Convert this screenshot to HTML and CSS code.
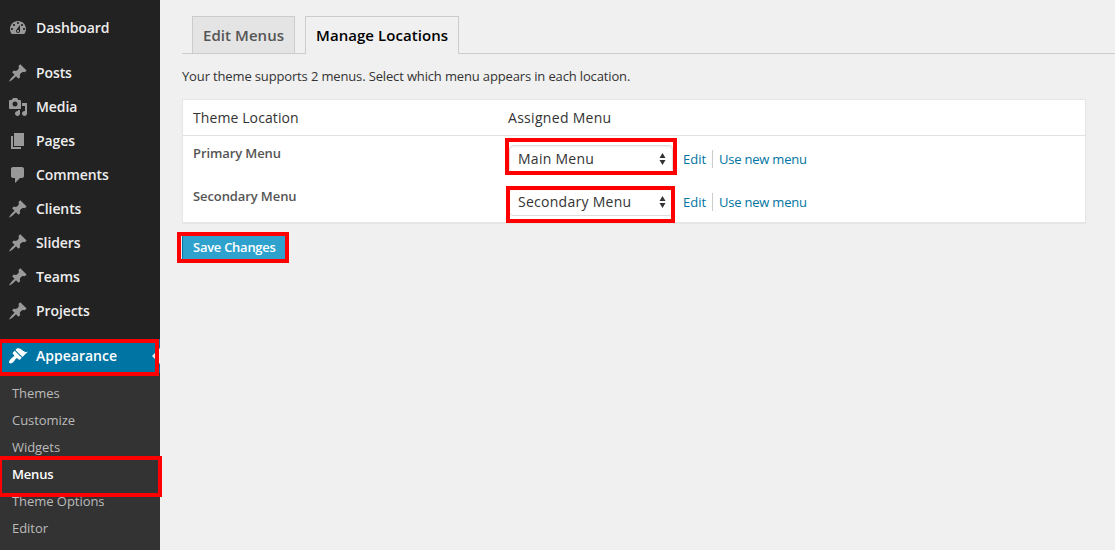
FILE: index.html
```html
<!DOCTYPE html>
<html lang="en">
<head>
<meta charset="utf-8">
<title>Menus</title>
<link rel="stylesheet" href="styles.css">
</head>
<body>
<svg class="defs" width="0" height="0" aria-hidden="true">
<symbol id="dash" viewBox="0 0 20 20"><path d="M3.76 16h12.48c1.1-1.37 1.76-3.11 1.76-5 0-4.42-3.58-8-8-8s-8 3.58-8 8c0 1.89.66 3.63 1.76 5zM10 4c.55 0 1 .45 1 1s-.45 1-1 1-1-.45-1-1 .45-1 1-1zM6 6c.55 0 1 .45 1 1s-.45 1-1 1-1-.45-1-1 .45-1 1-1zm8 0c.55 0 1 .45 1 1s-.45 1-1 1-1-.45-1-1 .45-1 1-1zm-5.37 5.55L12 7v6c0 1.1-.9 2-2 2s-2-.9-2-2c0-.57.24-1.08.63-1.45zM4 10c.55 0 1 .45 1 1s-.45 1-1 1-1-.45-1-1 .45-1 1-1zm12 0c.55 0 1 .45 1 1s-.45 1-1 1-1-.45-1-1 .45-1 1-1zm-5 3c0-.55-.45-1-1-1s-1 .45-1 1 .45 1 1 1 1-.45 1-1z" fill-rule="evenodd"/></symbol>
<symbol id="pin" viewBox="0 0 20 20"><path d="M10.44 3.02l1.82-1.82 6.36 6.35-1.83 1.82c-1.05-.68-2.48-.57-3.41.36l-.75.75c-.92.93-1.04 2.35-.35 3.41l-1.83 1.82-2.41-2.41-2.8 2.79c-.42.42-3.38 2.71-3.8 2.29s1.86-3.39 2.28-3.81l2.79-2.79L4.1 9.36l1.83-1.82c1.05.69 2.48.57 3.4-.36l.75-.75c.93-.92 1.05-2.35.36-3.41z"/></symbol>
<symbol id="media" viewBox="0 0 20 20"><path d="M13 11V4c0-.55-.45-1-1-1h-1.67L9 1H5L3.67 3H2c-.55 0-1 .45-1 1v7c0 .55.45 1 1 1h10c.55 0 1-.45 1-1zM7 4.5c1.38 0 2.5 1.12 2.5 2.5S8.38 9.5 7 9.5 4.5 8.38 4.5 7 5.62 4.5 7 4.5zM14 6h5v10.5c0 1.38-1.12 2.5-2.5 2.5S14 17.88 14 16.5s1.12-2.5 2.5-2.5c.17 0 .34.02.5.05V9h-3V6zm-4 8.05V13h2v3.5c0 1.38-1.12 2.5-2.5 2.5S7 17.88 7 16.5 8.12 14 9.5 14c.17 0 .34.02.5.05z" fill-rule="evenodd"/></symbol>
<symbol id="page" viewBox="0 0 20 20"><path d="M6 15V2h10v13H6zm-1 1h8v2H3V5h2v11z"/></symbol>
<symbol id="comment" viewBox="0 0 20 20"><path d="M5 2h9c1.1 0 2 .9 2 2v7c0 1.1-.9 2-2 2h-2l-5 5v-5H5c-1.1 0-2-.9-2-2V4c0-1.1.9-2 2-2z"/></symbol>
<symbol id="brush" viewBox="0 0 20 20"><path d="M14.48 11.06L7.41 3.99l1.5-1.5c.5-.56 2.3-.47 3.51.32 1.21.8 1.43 1.28 2.91 2.1 1.18.64 2.45 1.26 4.45.85zm-.71.71L6.7 4.7 4.93 6.47c-.39.39-.39 1.02 0 1.41l1.06 1.06c.39.39.39 1.03 0 1.42-.6.6-1.43 1.11-2.21 1.69-.35.26-.7.53-1.01.84C1.43 14.23.4 16.08 1.4 17.07c.99 1 2.84-.03 4.18-1.36.31-.31.58-.66.85-1.02.57-.78 1.08-1.61 1.69-2.21.39-.39 1.02-.39 1.41 0l1.06 1.06c.39.39 1.02.39 1.41 0z"/></symbol>
<symbol id="updown" viewBox="0 0 6 12"><path d="M3 0l3 5H0zM3 12l3-5H0z"/></symbol>
</svg>
<div class="app">
<nav class="sidebar">
<a class="item first"><svg class="icon"><use href="#dash"/></svg><span>Dashboard</span></a>
<a class="item"><svg class="icon"><use href="#pin"/></svg><span>Posts</span></a>
<a class="item"><svg class="icon"><use href="#media"/></svg><span>Media</span></a>
<a class="item"><svg class="icon"><use href="#page"/></svg><span>Pages</span></a>
<a class="item"><svg class="icon"><use href="#comment"/></svg><span>Comments</span></a>
<a class="item"><svg class="icon"><use href="#pin"/></svg><span>Clients</span></a>
<a class="item"><svg class="icon"><use href="#pin"/></svg><span>Sliders</span></a>
<a class="item"><svg class="icon"><use href="#pin"/></svg><span>Teams</span></a>
<a class="item"><svg class="icon"><use href="#pin"/></svg><span>Projects</span></a>
<a class="item current"><svg class="icon"><use href="#brush"/></svg><span>Appearance</span><i class="mark mark-appearance"></i></a>
<div class="submenu">
<a class="sub">Themes</a>
<a class="sub">Customize</a>
<a class="sub">Widgets</a>
<a class="sub active">Menus<i class="mark mark-menus"></i></a>
<a class="sub">Theme Options</a>
<a class="sub">Editor</a>
</div>
</nav>
<main class="content">
<div class="tabs"><a class="tab">Edit Menus</a><a class="tab selected">Manage Locations</a></div>
<p class="intro">Your theme supports 2 menus. Select which menu appears in each location.</p>
<section class="table">
<div class="row head"><div class="name">Theme Location</div><div class="assigned">Assigned Menu</div></div>
<div class="row"><div class="name">Primary Menu</div>
<div class="assign"><div class="select"><span>Main Menu</span><svg class="arrows"><use href="#updown"/></svg><i class="mark mark-main"></i></div><a class="link">Edit</a><a class="link new">Use new menu</a></div></div>
<div class="row"><div class="name">Secondary Menu</div>
<div class="assign"><div class="select"><span>Secondary Menu</span><svg class="arrows"><use href="#updown"/></svg><i class="mark mark-secondary"></i></div><a class="link">Edit</a><a class="link new">Use new menu</a></div></div>
</section>
<a class="save"><span>Save Changes</span><i class="mark mark-save"></i></a>
</main>
</div>
</body>
</html>
```
FILE: styles.css
```css
* { box-sizing: border-box; }
body { margin: 0; background: #f0f0f0; font-family: "Open Sans", sans-serif; font-size: 13px; color: #333; }
.defs { position: absolute; }
.app { display: flex; height: 550px; overflow: hidden; }

.sidebar { width: 160px; flex: none; background: #222; padding-top: 11px; display: flex; flex-direction: column; }
.item { height: 34px; flex: none; display: flex; align-items: center; padding-left: 8px; gap: 8px; color: #eee; font-size: 14px; font-weight: 600; line-height: 18px; letter-spacing: -.1px; position: relative; }
.item.first { margin-bottom: 11px; }
.icon { width: 20px; height: 20px; fill: #999; flex: none; }
.item.current { margin-top: 11px; background: #0074a2; color: #fff; letter-spacing: 0; }
.item.current .icon { fill: #fff; }
.item.current::after { content: ""; position: absolute; right: 0; top: 9px; border: 8px solid transparent; border-right-color: #f0f0f0; border-left: 0; }
.submenu { background: #333; flex: 1; padding-top: 7px; display: flex; flex-direction: column; }
.sub { height: 27px; flex: none; padding-left: 12px; line-height: 27px; letter-spacing: -.05px; color: #bbb; position: relative; }
.sub.active { color: #fff; font-weight: 600; letter-spacing: -.2px; }

.mark { position: absolute; border: 4px solid #f00; z-index: 2; pointer-events: none; }
.mark-appearance { left: -2px; top: 0; width: 161px; height: 37px; }
.mark-menus { left: -2px; top: -5px; width: 164px; height: 41px; }
.mark-main { left: -5px; top: -8px; width: 172px; height: 37px; }
.mark-secondary { left: -4px; top: -3px; width: 169px; height: 37px; }
.mark-save { left: -6px; top: -3px; width: 112px; height: 31px; }

.content { flex: 1; padding: 16px 0 0 22px; }
.tabs { height: 38px; display: flex; gap: 10px; padding-left: 10px; border-bottom: 1px solid #ccc; }
.tab { height: 37px; border: 1px solid #ccc; border-bottom: 0; background: #e4e4e4; color: #555; font-size: 15px; font-weight: 600; line-height: 36px; letter-spacing: .06px; padding: 0 10px; width: 103px; white-space: nowrap; }
.tab.selected { height: 38px; width: 154px; background: #f0f0f0; color: #000; }
.intro { margin: 12px 0 0; line-height: 20px; letter-spacing: -.145px; }
.table { width: 904px; height: 124px; margin-top: 13px; background: #fff; border: 1px solid #e5e5e5; box-shadow: 0 1px 1px rgba(0,0,0,.04); }
.row { display: flex; height: 43px; padding-left: 10px; }
.row .name { width: 315px; flex: none; font-weight: 600; color: #555; line-height: 20px; letter-spacing: -.1px; padding-top: 7px; }
.row.head { height: 36px; border-bottom: 1px solid #e1e1e1; font-size: 14px; color: #333; line-height: 36px; }
.row.head .name { font-weight: 400; color: #333; line-height: 36px; letter-spacing: .1px; padding: 0; }
.assigned { letter-spacing: .3px; }
.assign { display: flex; align-items: center; height: 28px; margin: 9px 0 0 1px; }
.select { width: 164px; height: 28px; border: 1px solid #ddd; border-radius: 4px; box-shadow: inset 0 1px 2px rgba(0,0,0,.07); display: flex; align-items: center; justify-content: space-between; padding: 0 6px 0 8px; font-size: 14px; color: #333; line-height: 18px; letter-spacing: .27px; position: relative; }
.arrows { width: 7px; height: 12px; fill: #333; }
.link { color: #0074a2; line-height: 18px; margin-left: 10px; }
.link.new { margin-left: 6px; padding-left: 6px; border-left: 1px solid #ccc; letter-spacing: -.23px; }
.save { display: flex; align-items: center; width: 106px; height: 28px; margin-top: 11px; padding: 0 0 2px 10px; background: #2ea2cc; border: 1px solid #0074a2; border-radius: 3px; color: #fff; font-weight: 600; letter-spacing: -.27px; position: relative; }
```
